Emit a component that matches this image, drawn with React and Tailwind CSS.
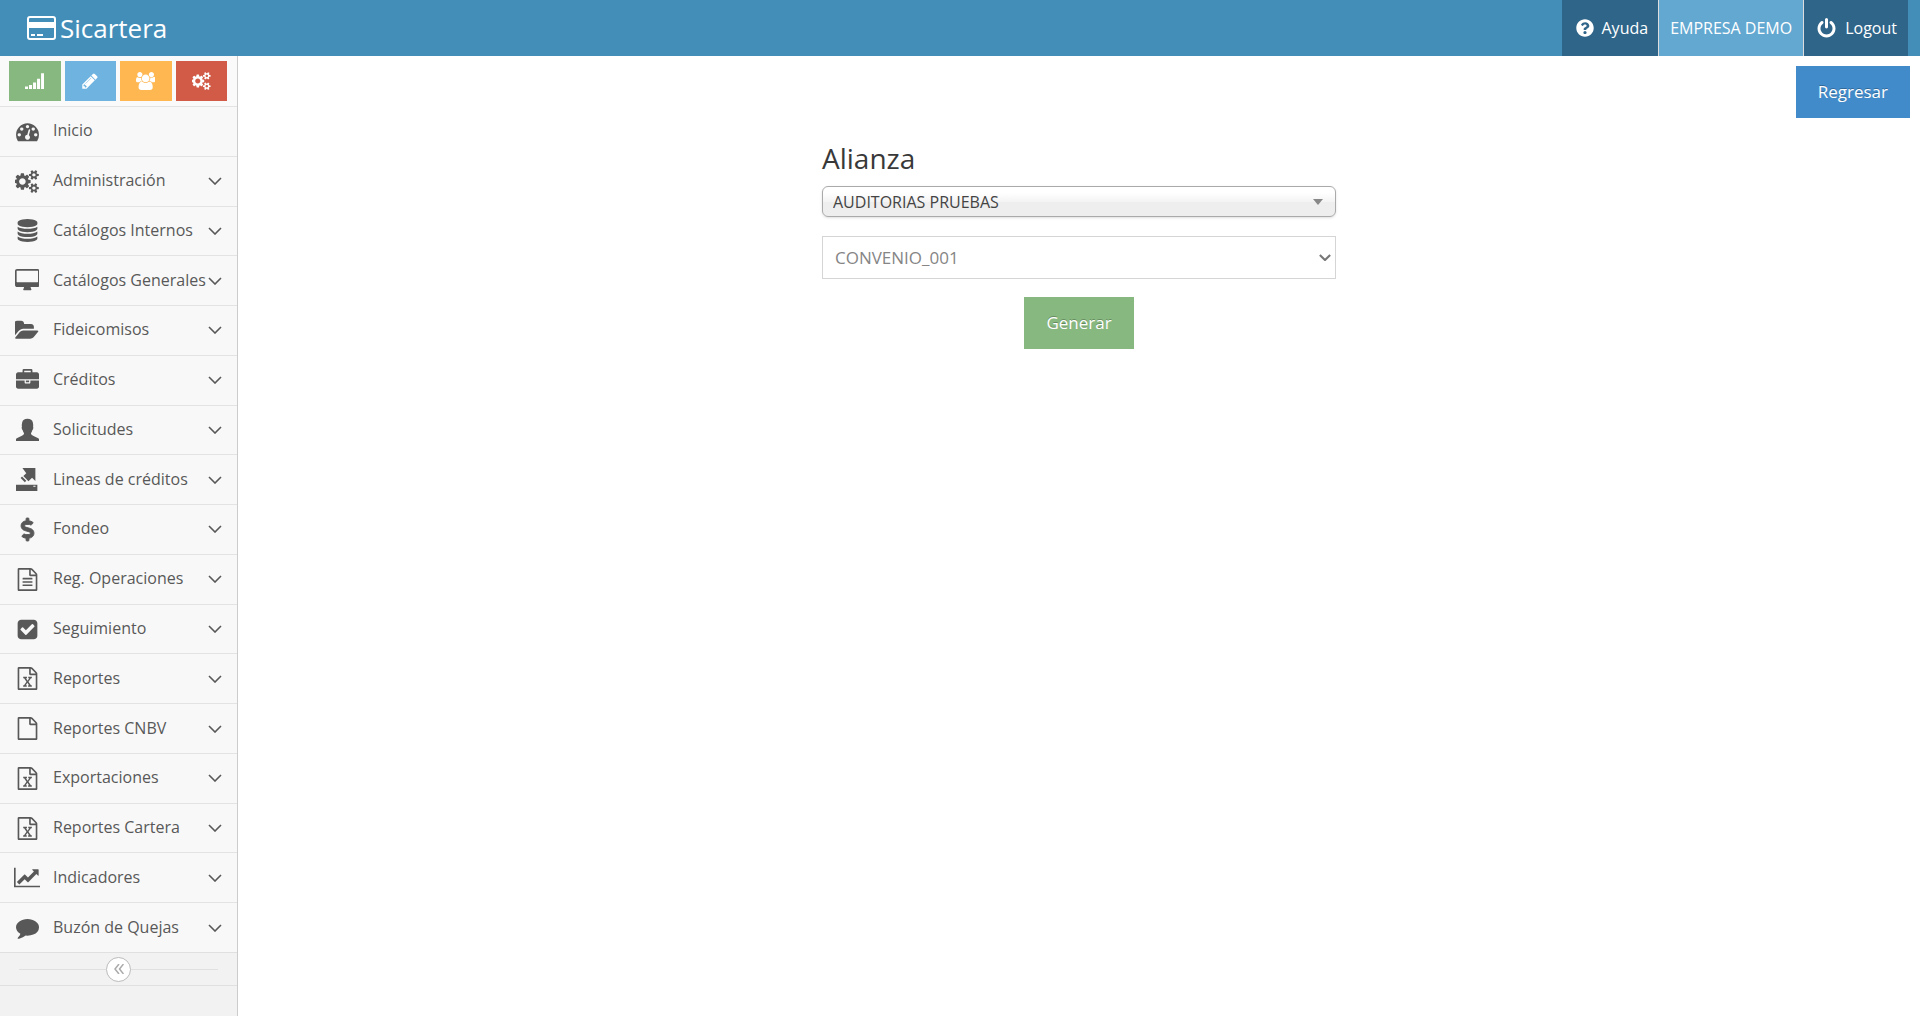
import React, { useState } from 'react'
import { FaDollarSign, FaQuestionCircle } from 'react-icons/fa'

const FILE_OUTLINE = 'M1596 380q28 28 48 76t20 88v1152q0 40-28 68t-68 28h-1344q-40 0-68-28t-28-68v-1600q0-40 28-68t68-28h896q40 0 88 20t76 48zm-444-244v376h376q-10-29-22-41l-313-313q-12-12-41-22zm384 1528v-1024h-416q-40 0-68-28t-28-68v-416h-768v1536h1280z'

const icons = {
    dashboard: { width: 1792, d: 'M384 1152q0-53-37.5-90.5t-90.5-37.5-90.5 37.5-37.5 90.5 37.5 90.5 90.5 37.5 90.5-37.5 37.5-90.5zm192-448q0-53-37.5-90.5t-90.5-37.5-90.5 37.5-37.5 90.5 37.5 90.5 90.5 37.5 90.5-37.5 37.5-90.5zm428 481l101-382q6-26-7.5-48.5t-38.5-29.5-48 6.5-30 39.5l-101 382q-60 5-107 43.5t-63 98.5q-20 77 20 146t117 89 146-20 89-117q16-60-6-117t-72-91zm660-33q0-53-37.5-90.5t-90.5-37.5-90.5 37.5-37.5 90.5 37.5 90.5 90.5 37.5 90.5-37.5 37.5-90.5zm-640-640q0-53-37.5-90.5t-90.5-37.5-90.5 37.5-37.5 90.5 37.5 90.5 90.5 37.5 90.5-37.5 37.5-90.5zm448 192q0-53-37.5-90.5t-90.5-37.5-90.5 37.5-37.5 90.5 37.5 90.5 90.5 37.5 90.5-37.5 37.5-90.5zm320 448q0 261-141 483-19 29-54 29h-1402q-35 0-54-29-141-221-141-483 0-182 71-348t191-286 286-191 348-71 348 71 286 191 191 286 71 348z' },
    cogs: { width: 1920, d: 'M832 896q0-106-75-181t-181-75-181 75-75 181 75 181 181 75 181-75 75-181zm768 512q0-52-38-90t-90-38-90 38-38 90q0 53 37.5 90.5t90.5 37.5 90.5-37.5 37.5-90.5zm0-1024q0-52-38-90t-90-38-90 38-38 90q0 53 37.5 90.5t90.5 37.5 90.5-37.5 37.5-90.5zm-384 421v185q0 10-7 19.5t-16 10.5l-155 24q-11 35-32 76 34 48 90 115 7 11 7 20 0 12-7 19-23 30-82.5 89.5t-78.5 59.5q-11 0-21-7l-115-90q-37 19-77 31-11 108-23 155-7 24-30 24h-186q-11 0-20-7.5t-10-17.5l-23-153q-34-10-75-31l-118 89q-7 7-20 7-11 0-21-8-144-133-144-160 0-9 7-19 10-14 41-53t47-61q-23-44-35-82l-152-24q-10-1-17-9.5t-7-19.5v-185q0-10 7-19.5t16-10.5l155-24q11-35 32-76-34-48-90-115-7-11-7-20 0-12 7-20 22-30 82-89t79-59q11 0 21 7l115 90q34-18 77-32 11-108 23-154 7-24 30-24h186q11 0 20 7.5t10 17.5l23 153q34 10 75 31l118-89q8-7 20-7 11 0 21 8 144 133 144 160 0 8-7 19-12 16-42 54t-45 60q23 48 34 82l152 23q10 2 17 10.5t7 19.5zm640 533v140q0 16-149 31-12 27-30 52 51 113 51 138 0 4-4 7-122 71-124 71-8 0-46-47t-52-68q-20 2-30 2t-30-2q-14 21-52 68t-46 47q-2 0-124-71-4-3-4-7 0-25 51-138-18-25-30-52-149-15-149-31v-140q0-16 149-31 13-29 30-52-51-113-51-138 0-4 4-7 4-2 35-20t59-34 30-16q8 0 46 46.5t52 67.5q20-2 30-2t30 2q51-71 92-112l6-2q4 0 124 70 4 3 4 7 0 25-51 138 17 23 30 52 149 15 149 31zm0-1024v140q0 16-149 31-12 27-30 52 51 113 51 138 0 4-4 7-122 71-124 71-8 0-46-47t-52-68q-20 2-30 2t-30-2q-14 21-52 68t-46 47q-2 0-124-71-4-3-4-7 0-25 51-138-18-25-30-52-149-15-149-31v-140q0-16 149-31 13-29 30-52-51-113-51-138 0-4 4-7 4-2 35-20t59-34 30-16q8 0 46 46.5t52 67.5q20-2 30-2t30 2q51-71 92-112l6-2q4 0 124 70 4 3 4 7 0 25-51 138 17 23 30 52 149 15 149 31z' },
    database: { width: 1792, d: 'M896 768q237 0 443-43t325-127v170q0 69-103 128t-280 93.5-385 34.5-385-34.5-280-93.5-103-128v-170q119 84 325 127t443 43zm0 768q237 0 443-43t325-127v170q0 69-103 128t-280 93.5-385 34.5-385-34.5-280-93.5-103-128v-170q119 84 325 127t443 43zm0-384q237 0 443-43t325-127v170q0 69-103 128t-280 93.5-385 34.5-385-34.5-280-93.5-103-128v-170q119 84 325 127t443 43zm0-1152q208 0 385 34.5t280 93.5 103 128v128q0 69-103 128t-280 93.5-385 34.5-385-34.5-280-93.5-103-128v-128q0-69 103-128t280-93.5 385-34.5z' },
    desktop: { width: 1920, d: 'M1792 992v-832q0-13-9.5-22.5t-22.5-9.5h-1600q-13 0-22.5 9.5t-9.5 22.5v832q0 13 9.5 22.5t22.5 9.5h1600q13 0 22.5-9.5t9.5-22.5zm128-832v1088q0 66-47 113t-113 47h-544q0 37 16 77.5t32 71 16 43.5q0 26-19 45t-45 19h-512q-26 0-45-19t-19-45q0-14 16-44t32-70 16-78h-544q-66 0-113-47t-47-113v-1088q0-66 47-113t113-47h1600q66 0 113 47t47 113z' },
    folder: { width: 1856, d: 'M1815 952q0 31-31 66l-336 396q-43 51-120.5 86.5t-143.5 35.5h-1088q-34 0-60.5-13t-26.5-43q0-31 31-66l336-396q43-51 120.5-86.5t143.5-35.5h1088q34 0 60.5 13t26.5 43zm-343-344v160h-832q-94 0-197 47.5t-164 119.5l-337 396-5 6q0-4-.5-12.5t-.5-12.5v-960q0-92 66-158t158-66h320q92 0 158 66t66 158v32h544q92 0 158 66t66 158z' },
    briefcase: { width: 1792, d: 'M640 256h512v-128h-512v128zm1152 640v480q0 66-47 113t-113 47h-1472q-66 0-113-47t-47-113v-480h672v160q0 26 19 45t45 19h320q26 0 45-19t19-45v-160h672zm-768 0v128h-256v-128h256zm768-480v384h-1792v-384q0-66 47-113t113-47h352v-160q0-40 28-68t68-28h576q40 0 68 28t28 68v160h352q66 0 113 47t47 113z' },
    user: { width: 1792, d: 'M0 1792v-130q0-60 60-90l400-190q160-70 160-150v-70q-60-70-90-190-60-50-80-150t10-150q-20-180 20-330 60-292 416-292t416 292q40 150 20 330 30 50 10 150t-80 150q-30 120-90 190v70q0 80 160 150l400 190q60 30 60 90v130z' },
    exit: { width: 1792, d: 'M0 1310h1664v482h-1664zM1350 1390v80h170v-80zM500 0h1010v1010l-260-260-280 280-400-400 230-230zM470 670l330 330-110 110-330-330z' },
    fileText: { width: 1792, d: FILE_OUTLINE + 'M512 800q0-14 9-23t23-9h704q14 0 23 9t9 23v64q0 14-9 23t-23 9h-704q-14 0-23-9t-9-23v-64zm736 224q14 0 23 9t9 23v64q0 14-9 23t-23 9h-704q-14 0-23-9t-9-23v-64q0-14 9-23t23-9h704zm0 256q14 0 23 9t9 23v64q0 14-9 23t-23 9h-704q-14 0-23-9t-9-23v-64q0-14 9-23t23-9h704z' },
    check: { width: 1792, d: 'M813 1299l614-614q19-19 19-45t-19-45l-102-102q-19-19-45-19t-45 19l-467 467-211-211q-19-19-45-19t-45 19l-102 102q-19 19-19 45t19 45l358 358q19 19 45 19t45-19zm851-883v960q0 119-84.5 203.5t-203.5 84.5h-960q-119 0-203.5-84.5t-84.5-203.5v-960q0-119 84.5-203.5t203.5-84.5h960q119 0 203.5 84.5t84.5 203.5z' },
    excel: { width: 1792, d: FILE_OUTLINE + 'm-979-234v106h281v-106h-75l103-161q5-7 10-16.5t7.5-13.5 3.5-4h2q1 4 5 10 2 4 4.5 7.5t6 8 6.5 8.5l107 161h-76v106h291v-106h-68l-192-273 195-282h67v-107h-279v107h74l-103 159q-4 7-10 16.5t-9 13.5l-2 3h-2q-1-4-5-10-6-11-17-23l-106-159h76v-107h-290v107h68l189 272-194 283h-68z' },
    file: { width: 1792, d: FILE_OUTLINE },
    chart: { width: 2048, d: 'M2048 1536v128h-2048v-1536h128v1408h1920zm-128-1248v435q0 21-19.5 29.5t-35.5-7.5l-121-121-633 633q-10 10-23 10t-23-10l-233-233-416 416-192-192 585-585q10-10 23-10t23 10l233 233 464-464-121-121q-16-16-7.5-35.5t29.5-19.5h435q14 0 23 9t9 23z' },
    comment: { width: 1792, d: 'M1792 896q0 174-120 321.5t-326 233-450 85.5q-70 0-145-8-198 175-460 225-49 14-114 22-17 2-30.5-9t-17.5-29v-1q-3-4-.5-12t2-10 4.5-9.5l6-9 7-8.5 8-9q7-8 31-34.5t34.5-38 31-39.5 32.5-51 27-59 26-76q-157-89-247.5-220t-90.5-281q0-130 71-248.5t191-204.5 286-136.5 348-50.5 348 50.5 286 136.5 191 204.5 71 248.5z' },
    signal: { width: 1920, d: 'M0 1440h300v260h-300zM400 1300h300v400h-300zM800 1040h300v660h-300zM1200 660h300v1040h-300zM1600 120h300v1580h-300z' },
    pencil: { width: 1792, d: 'M491 1536l91-91-235-235-91 91v107h128v128h107zm523-928q0-22-22-22-10 0-17 7l-542 542q-7 7-7 17 0 22 22 22 10 0 17-7l542-542q7-7 7-17zm-54-192l416 416-832 832h-416v-416zm683 96q0 53-37 90l-166 166-416-416 166-165q36-38 90-38 53 0 91 38l235 234q37 39 37 91z' },
    group: { width: 1920, d: 'M593 896q-162 5-265 128h-134q-82 0-138-40.5t-56-118.5q0-353 124-353 6 0 43.5 21t97.5 42.5 119 21.5q67 0 133-23-5 37-5 66 0 159 93 284zm1071 637q0 120-73 189.5t-194 69.5h-874q-121 0-194-69.5t-73-189.5q0-53 3.5-103.5t14-109 26.5-108.5 43-97.5 62-81 85.5-53.5 111.5-20q10 0 43 21.5t73 48 107 48 135 21.5 135-21.5 107-48 73-48 43-21.5q61 0 111.5 20t85.5 53.5 62 81 43 97.5 26.5 108.5 14 109 3.5 103.5zm-1024-1277q0 106-75 181t-181 75-181-75-75-181 75-181 181-75 181 75 75 181zm704 384q0 159-112.5 271.5t-271.5 112.5-271.5-112.5-112.5-271.5 112.5-271.5 271.5-112.5 271.5 112.5 112.5 271.5zm576 225q0 78-56 118.5t-138 40.5h-134q-103-123-265-128 93-125 93-284 0-29-5-66 66 23 133 23 59 0 119-21.5t97.5-42.5 43.5-21q124 0 124 353zm-128-609q0 106-75 181t-181 75-181-75-75-181 75-181 181-75 181 75 75 181z' },
    power: { width: 1792, d: 'M1664 896q0 156-61 298t-164 245-245 164-298 61-298-61-245-164-164-245-61-298q0-182 80.5-343t226.5-270q43-32 95.5-25t83.5 50q32 42 24.5 94.5t-49.5 84.5q-98 74-151.5 181t-53.5 228q0 104 40.5 198.5t109.5 163.5 163.5 109.5 198.5 40.5 198.5-40.5 163.5-109.5 109.5-163.5 40.5-198.5q0-121-53.5-228t-151.5-181q-42-32-49.5-84.5t24.5-94.5q31-43 84-50t95 25q146 109 226.5 270t80.5 343zm-640-768v640q0 52-38 90t-90 38-90-38-38-90v-640q0-52 38-90t90-38 90 38 38 90z' },
}

const Icon = ({ name, className }) => (
    <svg viewBox={`0 0 ${icons[name].width} 1792`} className={className} fill="currentColor" aria-hidden="true">
        <path fillRule={name === 'exit' ? 'evenodd' : 'nonzero'} d={icons[name].d} />
    </svg>
)

const Chevron = ({ className, strokeWidth = 1.6 }) => (
    <svg viewBox="0 0 14 8" className={className} fill="none" stroke="currentColor" strokeWidth={strokeWidth} aria-hidden="true">
        <path d="M1 1l6 6 6-6" />
    </svg>
)

const menu = [
    { label: 'Inicio', icon: 'dashboard', single: true },
    { label: 'Administración', icon: 'cogs' },
    { label: 'Catálogos Internos', icon: 'database' },
    { label: 'Catálogos Generales', icon: 'desktop' },
    { label: 'Fideicomisos', icon: 'folder' },
    { label: 'Créditos', icon: 'briefcase' },
    { label: 'Solicitudes', icon: 'user' },
    { label: 'Lineas de créditos', icon: 'exit' },
    { label: 'Fondeo', icon: 'dollar' },
    { label: 'Reg. Operaciones', icon: 'fileText' },
    { label: 'Seguimiento', icon: 'check' },
    { label: 'Reportes', icon: 'excel' },
    { label: 'Reportes CNBV', icon: 'file' },
    { label: 'Exportaciones', icon: 'excel' },
    { label: 'Reportes Cartera', icon: 'excel' },
    { label: 'Indicadores', icon: 'chart' },
    { label: 'Buzón de Quejas', icon: 'comment' },
]

const shortcuts = [
    { label: 'Estadísticas', icon: 'signal', color: 'bg-[#87b87f]' },
    { label: 'Editar', icon: 'pencil', color: 'bg-[#6fb3e0]' },
    { label: 'Usuarios', icon: 'group', color: 'bg-[#ffb752]' },
    { label: 'Configuración', icon: 'cogs', color: 'bg-[#d15b47]' },
]

const Navbar = () => (
    <header className="flex h-14 items-stretch justify-between bg-[#438eb9] pl-[27px] pr-3 text-white">
        <a href="#inicio" className="flex items-center gap-1 text-[26px]">
            <svg viewBox="0 0 29 24" className="h-6 w-[29px]" fill="none" aria-hidden="true">
                <rect x="1" y="1" width="27" height="22" rx="2" stroke="currentColor" strokeWidth="2" />
                <path d="M1 6h27v6H1zM4 18h4v2H4zM10 18h6v2h-6z" fill="currentColor" />
            </svg>
            Sicartera
        </a>
        <nav className="flex items-stretch text-base">
            <a href="#ayuda" className="flex items-center gap-2 bg-[#2e6589] pl-3.5 pr-2.5">
                <FaQuestionCircle className="h-[18px] w-[18px]" />
                Ayuda
            </a>
            <a href="#empresa" className="flex items-center border-x border-[#dddddd] bg-[#62a8d1] px-[11px]">EMPRESA DEMO</a>
            <a href="#logout" className="flex items-center gap-2 bg-[#2e6589] pl-3 pr-[11px]">
                <Icon name="power" className="h-[21px] w-[21px]" />
                Logout
            </a>
        </nav>
    </header>
)

const Sidebar = () => (
    <aside className="w-[238px] shrink-0 border-r border-[#cccccc] bg-[#f2f2f2] text-[#585858]">
        <div className="flex h-[50px] items-center gap-1 bg-[#fafafa] pl-[9px] pr-2.5">
            {shortcuts.map((item) => (
                <button key={item.label} aria-label={item.label} className={`flex h-10 flex-1 items-center justify-center text-white ${item.color}`}>
                    <Icon name={item.icon} className="h-[18px]" />
                </button>
            ))}
        </div>
        <ul className="grid min-h-[847px] auto-rows-fr border-b border-[#e0e0e0]">
            {menu.map((item) => (
                <li key={item.label} className="border-t border-[#e3e3e3] bg-[#f8f8f8]">
                    <a href="#menu" className="flex h-full items-center pl-[13px] pr-[15px]">
                        <span className="mr-3 flex w-7 justify-center">
                            {item.icon === 'dollar' ? <FaDollarSign className="h-[23px] w-[23px] overflow-visible" stroke="currentColor" strokeWidth="20" /> : <Icon name={item.icon} className="h-[23px] shrink-0" />}
                        </span>
                        <span className="flex-1 whitespace-nowrap pb-0.5 text-base">{item.label}</span>
                        {!item.single && <Chevron className="h-2 w-3.5 shrink-0" />}
                    </a>
                </li>
            ))}
        </ul>
        <div className="flex h-[33px] items-center border-b border-[#e0e0e0] px-[19px]">
            <span className="h-px flex-1 bg-[#e0e0e0]" />
            <button aria-label="Contraer menú" className="flex h-[25px] w-[25px] items-center justify-center rounded-full border border-[#bbbbbb] bg-white text-[#aaaaaa]">
                <svg viewBox="0 0 10 10" className="h-2.5 w-2.5" fill="none" stroke="currentColor" strokeWidth="1.5" aria-hidden="true">
                    <path d="M5 0L1 5l4 5M9.500 0l-4 5 4 5" />
                </svg>
            </button>
            <span className="h-px flex-1 bg-[#e0e0e0]" />
        </div>
    </aside>
)

const buttonClass = 'h-[52px] px-[22px] text-[17px] text-white [text-shadow:0_-1px_0_rgba(0,0,0,0.25)]'

const AlianzaForm = () => {
    const [alianza, setAlianza] = useState('AUDITORIAS PRUEBAS')
    const [convenio, setConvenio] = useState('CONVENIO_001')

    return (
        <form className="mx-auto flex w-full max-w-[514px] flex-col items-center pt-5" onSubmit={(e) => e.preventDefault()}>
            <label htmlFor="alianza" className="mb-2 w-full text-[28px] leading-10 text-[#393939]">Alianza</label>
            <div className="relative mb-[19px] w-full">
                <select
                    id="alianza"
                    value={alianza}
                    onChange={(e) => setAlianza(e.target.value)}
                    className="h-[31px] w-full appearance-none rounded-md border border-[#aaaaaa] bg-linear-to-b from-white from-20% via-[#f4f4f4] via-50% to-[#eeeeee] to-52% px-2.5 text-base text-[#444444] shadow-sm"
                >
                    <option>AUDITORIAS PRUEBAS</option>
                </select>
                <svg viewBox="0 0 10 6" className="pointer-events-none absolute right-[13px] top-[13px] h-1.5 w-2.5" fill="#888888" aria-hidden="true">
                    <path d="M0 0h10l-5 6z" />
                </svg>
            </div>
            <div className="relative mb-[18px] w-full">
                <select
                    aria-label="Convenio"
                    value={convenio}
                    onChange={(e) => setConvenio(e.target.value)}
                    className="h-[43px] w-full appearance-none border border-[#d5d5d5] bg-white px-3 text-[17px] text-[#858585]"
                >
                    <option>CONVENIO_001</option>
                </select>
                <Chevron className="pointer-events-none absolute right-[5px] top-[18px] h-[7px] w-3 text-[#777777]" strokeWidth={2.4} />
            </div>
            <button type="submit" className={`bg-[#87b87f] ${buttonClass}`}>Generar</button>
        </form>
    )
}

export default function App() {
    return (
        <div className="flex min-h-screen flex-col bg-white font-['Open_Sans',sans-serif]">
            <Navbar />
            <div className="flex flex-1">
                <Sidebar />
                <main className="min-w-0 flex-1 pt-2.5">
                    <div className="flex justify-end pr-2.5">
                        <button type="button" className={`bg-[#428bca] ${buttonClass}`}>Regresar</button>
                    </div>
                    <AlianzaForm />
                </main>
            </div>
        </div>
    )
}
